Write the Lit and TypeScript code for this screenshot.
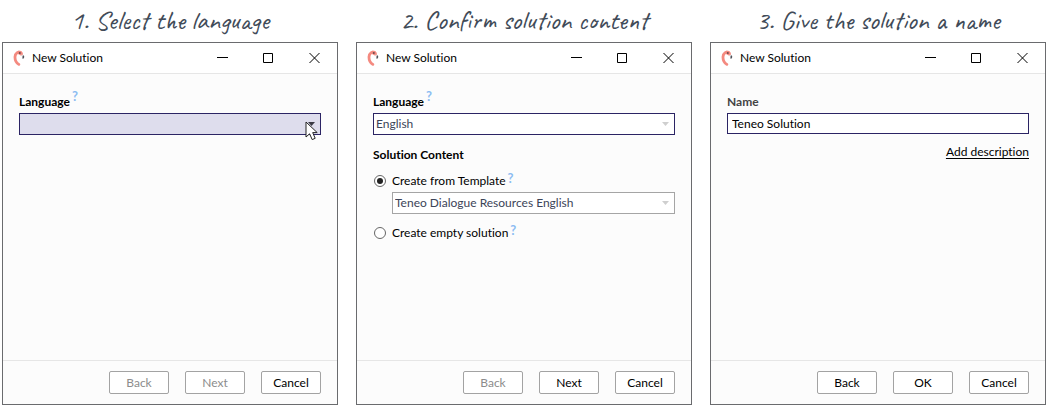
import { LitElement, html, css, svg, nothing } from "lit";
import { customElement, property } from "lit/decorators.js";

const textFont = css`"Segoe UI", Lato, "Open Sans", sans-serif`;

const pointer = svg`
  <path d="M1 1V16L4.6 12.8L7.2 18.6L10.2 17.3L7.7 11.6H12.2Z"
    fill="#fff" stroke="#222" stroke-width="1" stroke-linejoin="round" />`;

@customElement("combo-box")
class ComboBox extends LitElement {
  @property() value = "";
  @property() label = "";
  @property() kind = "";

  static styles = css`
    :host {
      display: block;
    }
    .combo {
      display: grid;
      align-items: center;
      position: relative;
    }
    select,
    .arrow {
      grid-area: 1 / 1;
    }
    select {
      appearance: none;
      box-sizing: border-box;
      width: 100%;
      height: 22px;
      margin: 0;
      padding: 0 24px 0 2px;
      border: 1px solid #2b2464;
      border-radius: 0;
      background: #fff;
      color: #3c4458;
      font: 12px/16px ${textFont};
      outline: none;
    }
    .arrow {
      justify-self: end;
      width: 7px;
      height: 4px;
      margin-right: 6px;
      fill: #cfcfcf;
      pointer-events: none;
    }
    .hover select {
      background: #dedded;
    }
    .hover .arrow {
      fill: #3a3a44;
    }
    .plain select {
      border-color: #a5a5a5;
    }
    .pointer {
      position: absolute;
      right: 3px;
      top: 8px;
      width: 13px;
      height: 20px;
      pointer-events: none;
    }
  `;

  render() {
    return html`<div class="combo ${this.kind}">
      <select aria-label=${this.label}>
        <option>${this.value}</option>
      </select>
      <svg class="arrow" viewBox="0 0 7 4"><path d="M0 0H7L3.5 4Z" /></svg>
      ${this.kind === "hover"
        ? html`<svg class="pointer" viewBox="0 0 13 20">${pointer}</svg>`
        : nothing}
    </div>`;
  }
}

@customElement("dialog-window")
class DialogWindow extends LitElement {
  @property({ attribute: false }) actions: { text: string; off?: boolean }[] = [];

  static styles = css`
    :host {
      display: flex;
      flex-direction: column;
      box-sizing: border-box;
      border: 1px solid #6a6b6e;
      background: #fcfcfc;
      color: #000;
      font: 12px/16px ${textFont};
      font-variant-ligatures: none;
    }
    header {
      display: flex;
      align-items: center;
      height: 30px;
      padding-left: 10px;
      background: #fff;
      border-bottom: 1px solid #e6e6e6;
    }
    .logo {
      width: 12px;
      height: 16px;
      margin-right: 7px;
    }
    .title {
      flex: 1;
    }
    .caption {
      display: grid;
      place-items: center;
      width: 46px;
      height: 30px;
      padding: 0;
      border: 0;
      background: none;
    }
    .caption svg {
      width: 11px;
      height: 11px;
      fill: none;
      stroke: #000;
    }
    main {
      flex: 1;
      padding: 20px 16px;
    }
    footer {
      display: flex;
      justify-content: flex-end;
      gap: 16px;
      padding: 10px 16px;
      border-top: 1px solid #e6e6e6;
    }
    .action {
      width: 60px;
      height: 23px;
      padding: 0;
      border: 1px solid #a3a3a3;
      border-radius: 2px;
      background: #fff;
      color: #000;
      font: inherit;
    }
    .action:disabled {
      color: #8c8c8c;
    }
  `;

  render() {
    return html`
      <header>
        <svg class="logo" viewBox="0 0 12 16" aria-hidden="true">
          <path d="M7.4 2.6C5.2 1.4 2.2 3.2 2 6.8C1.9 10 3 12.6 5.8 14.4"
            fill="none" stroke="#f48a80" stroke-width="2.8" stroke-linecap="round" />
          <path d="M5.2 .8C8.2 .2 10.4 2.2 9.8 5L8.2 5.8L5 4Z" fill="#f48a80" />
          <circle cx="6.8" cy="2.9" r="1" fill="#6b4a4e" />
          <path d="M8.6 4.4L10.6 5.2L10 7L8.4 6Z" fill="#ddd" />
          <path d="M10.4 5.2C11.8 6 11.4 8 9.8 9C9 7.6 9.4 6.2 10.4 5.2Z" fill="#4c4f58" />
        </svg>
        <span class="title">New Solution</span>
        <button class="caption" aria-label="Minimize">
          <svg viewBox="0 0 11 11"><path d="M0 4.5H11" /></svg>
        </button>
        <button class="caption" aria-label="Maximize">
          <svg viewBox="0 0 11 11"><path d="M.5 .5H9.5V9.5H.5Z" /></svg>
        </button>
        <button class="caption" aria-label="Close">
          <svg viewBox="0 0 11 11"><path d="M.5 0L10.5 10M10.5 0L.5 10" /></svg>
        </button>
      </header>
      <main><slot></slot></main>
      <footer>
        ${this.actions.map(
          (a) => html`<button class="action" ?disabled=${a.off}>${a.text}</button>`
        )}
      </footer>
    `;
  }
}

@customElement("app-root")
class AppRoot extends LitElement {
  static styles = css`
    :host {
      display: grid;
      grid-template-columns: repeat(3, minmax(0, 1fr));
      gap: 18px;
      box-sizing: border-box;
      min-height: 100vh;
      padding: 0 2px 3px;
      background: #fff;
      font: 12px/16px ${textFont};
      font-variant-ligatures: none;
    }
    .step {
      display: flex;
      flex-direction: column;
    }
    h2 {
      margin: 0;
      height: 42px;
      font: 500 27px/40px "Ink Free", "Caveat", cursive;
      text-align: center;
      white-space: nowrap;
      color: #414b58;
    }
    dialog-window {
      flex: 1;
    }
    .label {
      display: flex;
      height: 16px;
      margin-bottom: 3px;
      font-weight: 700;
    }
    .soft {
      color: #444;
    }
    .section {
      margin: 12px 0 10px;
    }
    .help {
      margin: -6px 0 0 2px;
      color: #8dbcf2;
      font-size: 13px;
      font-weight: 700;
      text-decoration: none;
    }
    .choice {
      display: flex;
      align-items: center;
      height: 16px;
      margin-bottom: 3px;
    }
    .choice input {
      appearance: none;
      display: grid;
      place-items: center;
      box-sizing: border-box;
      width: 12px;
      height: 12px;
      margin: 0 6px 0 1px;
      border: 1px solid #666;
      border-radius: 50%;
      background: #fff;
    }
    .choice input:checked::before {
      content: "";
      width: 6px;
      height: 6px;
      border-radius: 50%;
      background: #222;
    }
    .template {
      margin: 0 0 11px 19px;
    }
    .name {
      display: block;
      box-sizing: border-box;
      width: 100%;
      height: 21px;
      padding: 0 4px;
      border: 1px solid #2b2464;
      border-radius: 0;
      background: #fff;
      color: #000;
      font: inherit;
      outline: none;
    }
    .more {
      margin-top: 10px;
      text-align: right;
    }
    .more a {
      color: #000;
      text-underline-offset: 2px;
    }
  `;

  help() {
    return html`<a class="help" href="#help" aria-label="Help">?</a>`;
  }

  render() {
    return html`
      <section class="step">
        <h2>1. Select the language</h2>
        <dialog-window
          .actions=${[{ text: "Back", off: true }, { text: "Next", off: true }, { text: "Cancel" }]}
        >
          <div class="label">Language${this.help()}</div>
          <combo-box label="Language" kind="hover"></combo-box>
        </dialog-window>
      </section>
      <section class="step">
        <h2>2. Confirm solution content</h2>
        <dialog-window
          .actions=${[{ text: "Back", off: true }, { text: "Next" }, { text: "Cancel" }]}
        >
          <div class="label">Language${this.help()}</div>
          <combo-box label="Language" value="English"></combo-box>
          <div class="label section">Solution Content</div>
          <div class="choice">
            <input type="radio" name="content" id="template" checked />
            <label for="template">Create from Template</label>${this.help()}
          </div>
          <combo-box
            class="template"
            label="Template"
            kind="plain"
            value="Teneo Dialogue Resources English"
          ></combo-box>
          <div class="choice">
            <input type="radio" name="content" id="empty" />
            <label for="empty">Create empty solution</label>${this.help()}
          </div>
        </dialog-window>
      </section>
      <section class="step">
        <h2>3. Give the solution a name</h2>
        <dialog-window .actions=${[{ text: "Back" }, { text: "OK" }, { text: "Cancel" }]}>
          <label class="label soft" for="name">Name</label>
          <input class="name" id="name" type="text" value="Teneo Solution" />
          <div class="more"><a href="#description">Add description</a></div>
        </dialog-window>
      </section>
    `;
  }
}
